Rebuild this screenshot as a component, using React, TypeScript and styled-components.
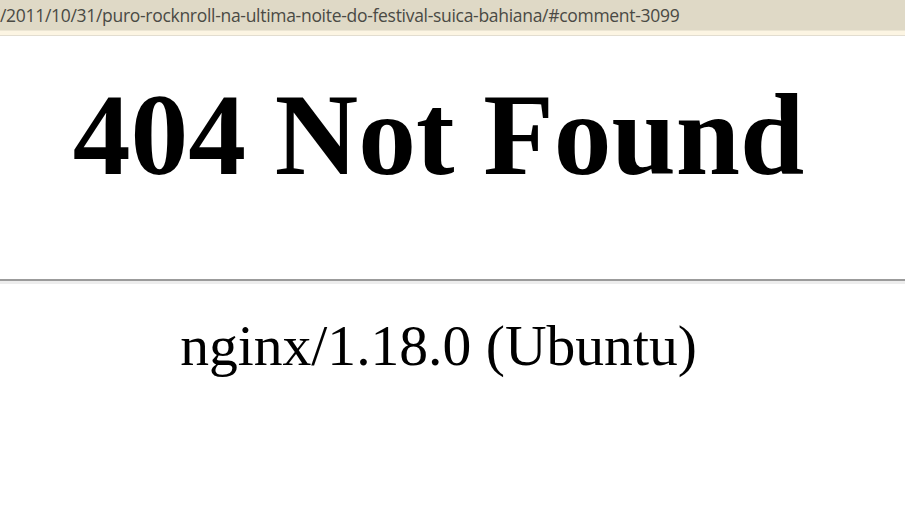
import * as React from "react";
import styled, { createGlobalStyle } from "styled-components";

const GlobalStyle = createGlobalStyle`
  html, body {
    margin: 0;
    padding: 0;
    background: #ffffff;
  }
`;

const Page = styled.div`
  width: 905px;
  height: 507px;
  overflow: hidden;
  display: flex;
  flex-direction: column;
  background: #ffffff;
`;

const AddressBar = styled.div`
  height: 30px;
  background: #dfd9c6;
  border-bottom: 1px solid #ece6d4;
  display: flex;
  align-items: center;
  color: #4a4a44;
  font-family: "Open Sans", "Noto Sans", sans-serif;
  font-size: 17.5px;
  letter-spacing: -0.3px;
  white-space: nowrap;
`;

const Strip = styled.div`
  height: 4px;
  background: #fcf5e3;
  border-bottom: 1px solid #e2ddd0;
`;

const Center = styled.div`
  width: 877px;
  text-align: center;
  font-family: "Liberation Serif", "Times New Roman", serif;
  color: #000000;
`;

const Heading = styled.h1`
  margin: 33px 0 0;
  font-size: 115.5px;
  font-weight: 700;
  line-height: normal;
`;

const Rule = styled.hr`
  margin: 77px 0 0;
  border: 0;
  height: 0;
  border-top: 2px solid #9b9b9b;
  border-bottom: 3px solid #ededed;
`;

const Footer = styled.div`
  margin-top: 29px;
  font-size: 57.6px;
  line-height: normal;
`;

const App = () => {
  return (
    <Page>
      <GlobalStyle />
      <AddressBar>
        /2011/10/31/puro-rocknroll-na-ultima-noite-do-festival-suica-bahiana/#comment-3099
      </AddressBar>
      <Strip />
      <Center>
        <Heading>404 Not Found</Heading>
      </Center>
      <Rule />
      <Center>
        <Footer>nginx/1.18.0 (Ubuntu)</Footer>
      </Center>
    </Page>
  );
};

export default App;
